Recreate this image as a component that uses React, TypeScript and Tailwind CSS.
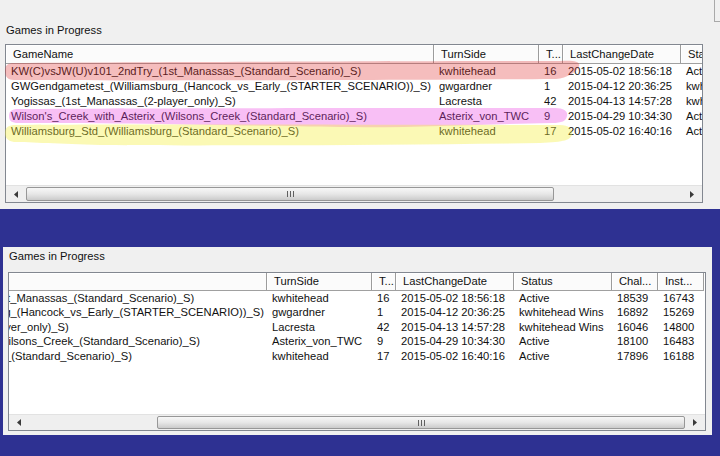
const columns = [
  { label: "GameName", w: "w-[428px]" },
  { label: "TurnSide", w: "w-[105px]" },
  { label: "T...", w: "w-[24px]" },
  { label: "LastChangeDate", w: "w-[118px]" },
  { label: "Status", w: "w-[98px]" },
  { label: "Chal...", w: "w-[46px]" },
  { label: "Inst...", w: "w-[46px]" },
];

const games = [
  ["KW(C)vsJW(U)v101_2ndTry_(1st_Manassas_(Standard_Scenario)_S)", "kwhitehead", "16", "2015-05-02 18:56:18", "Active", "18539", "16743"],
  ["GWGendgametest_(Williamsburg_(Hancock_vs_Early_(STARTER_SCENARIO))_S)", "gwgardner", "1", "2015-04-12 20:36:25", "kwhitehead Wins", "16892", "15269"],
  ["Yogissas_(1st_Manassas_(2-player_only)_S)", "Lacresta", "42", "2015-04-13 14:57:28", "kwhitehead Wins", "16046", "14800"],
  ["Wilson's_Creek_with_Asterix_(Wilsons_Creek_(Standard_Scenario)_S)", "Asterix_von_TWC", "9", "2015-04-29 10:34:30", "Active", "18100", "16483"],
  ["Williamsburg_Std_(Williamsburg_(Standard_Scenario)_S)", "kwhitehead", "17", "2015-05-02 16:40:16", "Active", "17896", "16188"],
];

function HScroll({ end, h }: { end?: boolean; h: string }) {
  return (
    <div className={`flex w-[696px] flex-none ${h} bg-[#efefef] border-t border-[#e2e2e2]`}>
      <div className="w-[20px] flex-none flex items-center justify-center">
        <svg width="4" height="7" viewBox="0 0 4 7">
          <path d="M4 0 L0 3.5 L4 7 Z" fill="#3a3a3a" />
        </svg>
      </div>
      <div className={`w-[656px] flex-none flex py-[1px] ${end ? "justify-end" : "justify-start"}`}>
        <div className="w-[528px] flex-none rounded-[2px] border border-[#979797] bg-linear-to-b from-[#f7f7f7] via-[#e7e7e7] to-[#cbcbcb] flex items-center justify-center gap-[2px]">
          <span className="w-[1px] h-[6px] bg-[#606060]" />
          <span className="w-[1px] h-[6px] bg-[#606060]" />
          <span className="w-[1px] h-[6px] bg-[#606060]" />
        </div>
      </div>
      <div className="w-[20px] flex-none flex items-center justify-center">
        <svg width="4" height="7" viewBox="0 0 4 7">
          <path d="M0 0 L4 3.5 L0 7 Z" fill="#3a3a3a" />
        </svg>
      </div>
    </div>
  );
}

function ListView({ scrolled, headH, rowH, bodyH, barH }: { scrolled?: boolean; headH: string; rowH: string; bodyH: string; barH: string }) {
  return (
    <div className="w-[698px] border border-[#828790] bg-white">
      <div className={`w-[696px] ${bodyH} overflow-hidden`}>
        <div className={`w-max ${scrolled ? "ml-[-170px]" : ""}`}>
          <div className={`flex ${headH} border-b border-[#a0a0a0]`}>
            {columns.map((c) => (
              <div
                key={c.label}
                className={`flex-none ${c.w} pl-[7px] flex items-center whitespace-nowrap overflow-hidden border-r border-[#9c9c9c] shadow-[inset_1px_1px_0_#ffffff] bg-[#fbfbfb]`}
              >
                {c.label}
              </div>
            ))}
          </div>
          {games.map((row) => (
            <div key={row[0]} className={`flex ${rowH}`}>
              {row.map((v, i) => (
                <div key={i} className={`flex-none ${columns[i].w} pl-[5px] flex items-center whitespace-nowrap overflow-hidden`}>
                  {v}
                </div>
              ))}
            </div>
          ))}
        </div>
      </div>
      <HScroll h={barH} end={scrolled} />
    </div>
  );
}

export default function App() {
  return (
    <div className="w-[720px] h-[456px] overflow-hidden bg-[#2e3192] font-['Liberation_Sans',Arial,sans-serif] text-[11.2px] text-[#111]">
      <div className="relative flex h-[209px] bg-[#f0f0f0]">
        <div className="flex flex-col ml-[5px]">
          <div className="mt-[23px] h-[14px] leading-[14px] pl-[1px]">Games in Progress</div>
          <div className="mt-[7px]">
            <ListView headH="h-[19px]" rowH="h-[15px]" bodyH="h-[140px]" barH="h-[17px]" />
          </div>
        </div>
        <div className="ml-auto w-[6px] h-[22px] border-l border-b border-[#a9a9a9]" />
        <svg className="absolute inset-0 pointer-events-none" width="720" height="209" viewBox="0 0 720 209">
          <path
            d="M5 71 C5 65 8 63 14 63 C150 62 420 61 560 61 C572 60 581 61 579 66 C577 72 567 78 556 79 C420 80 150 81 14 80 C8 80 5 77 5 71 Z"
            fill="rgb(225,55,55)"
            fillOpacity="0.33"
          />
          <path
            d="M9 116 C9 111 12 109 18 109 C150 108 400 108 555 108 C565 108 568 112 567 116 C566 121 562 123 552 123 C480 124 420 128 340 127 C260 126 150 123 18 123 C12 123 9 121 9 116 Z"
            fill="rgb(235,60,225)"
            fillOpacity="0.33"
          />
          <path
            d="M5 133 C5 127 9 125 16 125 C150 124 400 125 560 125 C570 125 573 130 572 134 C571 140 565 142 540 143 C400 145 200 146 100 145 C60 144 30 142 14 142 C8 141 5 138 5 133 Z"
            fill="rgb(245,240,60)"
            fillOpacity="0.38"
          />
        </svg>
      </div>
      <div className="mt-[38px] ml-[3px] w-[709px] h-[188px] bg-[#f0f0f0] pl-[5px] pt-[2px]">
        <div className="h-[14px] leading-[14px] pl-[1px]">Games in Progress</div>
        <div className="mt-[9px]">
          <ListView scrolled headH="h-[18px]" rowH="h-[14.5px]" bodyH="h-[141px]" barH="h-[16px]" />
        </div>
      </div>
    </div>
  );
}
